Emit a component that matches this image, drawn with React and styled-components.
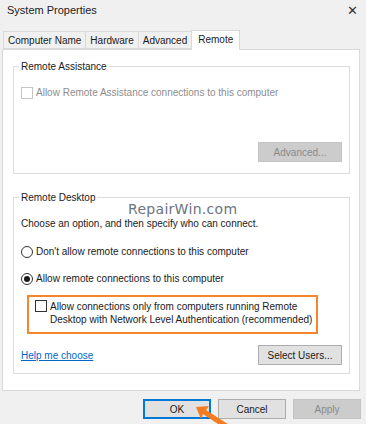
import React from "react"
import styled, { createGlobalStyle } from "styled-components"

const GlobalStyle = createGlobalStyle`
  html, body {
    margin: 0;
    padding: 0;
    background: #f0f0f0;
  }
  * {
    box-sizing: border-box;
  }
`

const Window = styled.div`
  position: relative;
  width: 366px;
  height: 424px;
  overflow: hidden;
  background: #f0f0f0;
  font-family: "Liberation Sans", Arial, sans-serif;
  font-size: 10px;
  line-height: 13px;
  color: #1a1a1a;
`

const TitleBar = styled.div`
  display: flex;
  align-items: center;
  justify-content: space-between;
  height: 21px;
  padding: 0 8px 0 7px;
  font-size: 11px;
  color: #222;
`

const CloseGlyph = styled.span`
  font-family: "DejaVu Sans", sans-serif;
  font-size: 13px;
  color: #333;
`

const TabStrip = styled.div`
  display: flex;
  align-items: flex-end;
  height: 28px;
  padding-left: 3px;
`

const Tab = styled.div`
  height: ${(p) => (p.$active ? "20px" : "18px")};
  padding: ${(p) => (p.$active ? "0 6px 2px" : "1px 4px 0")};
  display: flex;
  align-items: center;
  background: ${(p) => (p.$active ? "#ffffff" : "#f0f0f0")};
  border: 1px solid #d9d9d9;
  border-bottom: ${(p) => (p.$active ? "none" : "1px solid #d9d9d9")};
  margin-right: ${(p) => (p.$active ? "0" : "-1px")};
  margin-bottom: ${(p) => (p.$active ? "-1px" : "0")};
  position: relative;
  z-index: ${(p) => (p.$active ? 1 : 0)};
`

const Panel = styled.div`
  position: relative;
  margin-left: 2px;
  width: 358px;
  height: 342px;
  background: #ffffff;
  border: 1px solid #d9d9d9;
  padding: 10px 9px 0 10px;
`

const GroupBox = styled.fieldset`
  margin: 0 0 ${(p) => p.$gap || 0}px;
  padding: 0 7px ${(p) => p.$padBottom || 0}px;
  border: 1px solid #dcdcdc;
  min-width: 0;
`

const Legend = styled.legend`
  padding: 0 2px;
  margin-left: -2px;
  color: #1a1a1a;
`

const Row = styled.div`
  display: flex;
  align-items: center;
  gap: 3px;
  margin-top: ${(p) => p.$top || 0}px;
  color: ${(p) => (p.$disabled ? "#8d8d8d" : "#1a1a1a")};
`

const Box = styled.span`
  flex: none;
  width: 12px;
  height: 12px;
  border: 1px solid ${(p) => (p.$disabled ? "#c4c4c4" : "#333333")};
  background: #fff;
`

const Radio = styled.span`
  flex: none;
  width: 12px;
  height: 12px;
  border-radius: 50%;
  border: 1px solid #333333;
  display: flex;
  align-items: center;
  justify-content: center;
  &::after {
    content: "";
    width: 6px;
    height: 6px;
    border-radius: 50%;
    background: ${(p) => (p.$checked ? "#1a1a1a" : "transparent")};
  }
`

const Text = styled.p`
  margin: ${(p) => p.$top || 0}px 0 0;
`

const Highlight = styled.div`
  display: flex;
  align-items: flex-start;
  gap: 3px;
  margin: 10px 0 0 6px;
  width: 291px;
  height: 39px;
  border: 2px solid #f7862a;
  padding: 3px 6px;
  white-space: nowrap;
`

const ButtonRow = styled.div`
  display: flex;
  justify-content: ${(p) => p.$justify || "flex-end"};
  align-items: center;
  gap: 7px;
  margin-top: ${(p) => p.$top || 0}px;
`

const Button = styled.div`
  width: ${(p) => p.$width || 84}px;
  height: 20px;
  display: flex;
  align-items: center;
  justify-content: center;
  background: ${(p) => (p.$disabled ? "#cccccc" : "#e1e1e1")};
  color: ${(p) => (p.$disabled ? "#8a8a8a" : "#1a1a1a")};
  border: ${(p) => (p.$focused ? "2px solid #0078d7" : p.$disabled ? "1px solid #c4c4c4" : "1px solid #adadad")};
`

const Link = styled.a`
  color: #0066cc;
  text-decoration: underline;
`

const Watermark = styled.div`
  position: absolute;
  left: 125px;
  top: 151px;
  font-family: "DejaVu Sans", sans-serif;
  font-size: 14px;
  line-height: 16px;
  color: #6b7480;
  letter-spacing: 0.3px;
`

const Footer = styled.div`
  display: flex;
  justify-content: flex-end;
  gap: 7px;
  padding: 8px 5px 0 0;
`

const Arrow = styled.svg`
  position: absolute;
  left: 190px;
  top: 402px;
`

export default function App() {
  return (
    <Window>
      <GlobalStyle />
      <TitleBar>
        <span>System Properties</span>
        <CloseGlyph>✕</CloseGlyph>
      </TitleBar>
      <TabStrip>
        <Tab>Computer Name</Tab>
        <Tab>Hardware</Tab>
        <Tab>Advanced</Tab>
        <Tab $active>Remote</Tab>
      </TabStrip>
      <Panel>
        <GroupBox $gap={17} $padBottom={11}>
          <Legend>Remote Assistance</Legend>
          <Row $top={13} $disabled>
            <Box $disabled />
            <span>Allow Remote Assistance connections to this computer</span>
          </Row>
          <ButtonRow $top={43}>
            <Button $disabled>Advanced...</Button>
          </ButtonRow>
        </GroupBox>
        <GroupBox $padBottom={8}>
          <Legend>Remote Desktop</Legend>
          <Text $top={13}>Choose an option, and then specify who can connect.</Text>
          <Row $top={15}>
            <Radio />
            <span>Don't allow remote connections to this computer</span>
          </Row>
          <Row $top={14}>
            <Radio $checked />
            <span>Allow remote connections to this computer</span>
          </Row>
          <Highlight>
            <Box />
            <span>
              Allow connections only from computers running Remote
              <br />
              Desktop with Network Level Authentication (recommended)
            </span>
          </Highlight>
          <ButtonRow $justify="space-between" $top={11}>
            <Link>Help me choose</Link>
            <Button>Select Users...</Button>
          </ButtonRow>
        </GroupBox>
        <Watermark>RepairWin.com</Watermark>
      </Panel>
      <Footer>
        <Button $width={68} $focused>OK</Button>
        <Button $width={68}>Cancel</Button>
        <Button $width={68} $disabled>Apply</Button>
      </Footer>
      <Arrow width="50" height="30" viewBox="0 0 50 30">
        <path d="M6 5 L19 4 L16 8 L44 26 L40 30 L13 12 L11 17 Z" fill="#f47c20" />
      </Arrow>
    </Window>
  )
}
